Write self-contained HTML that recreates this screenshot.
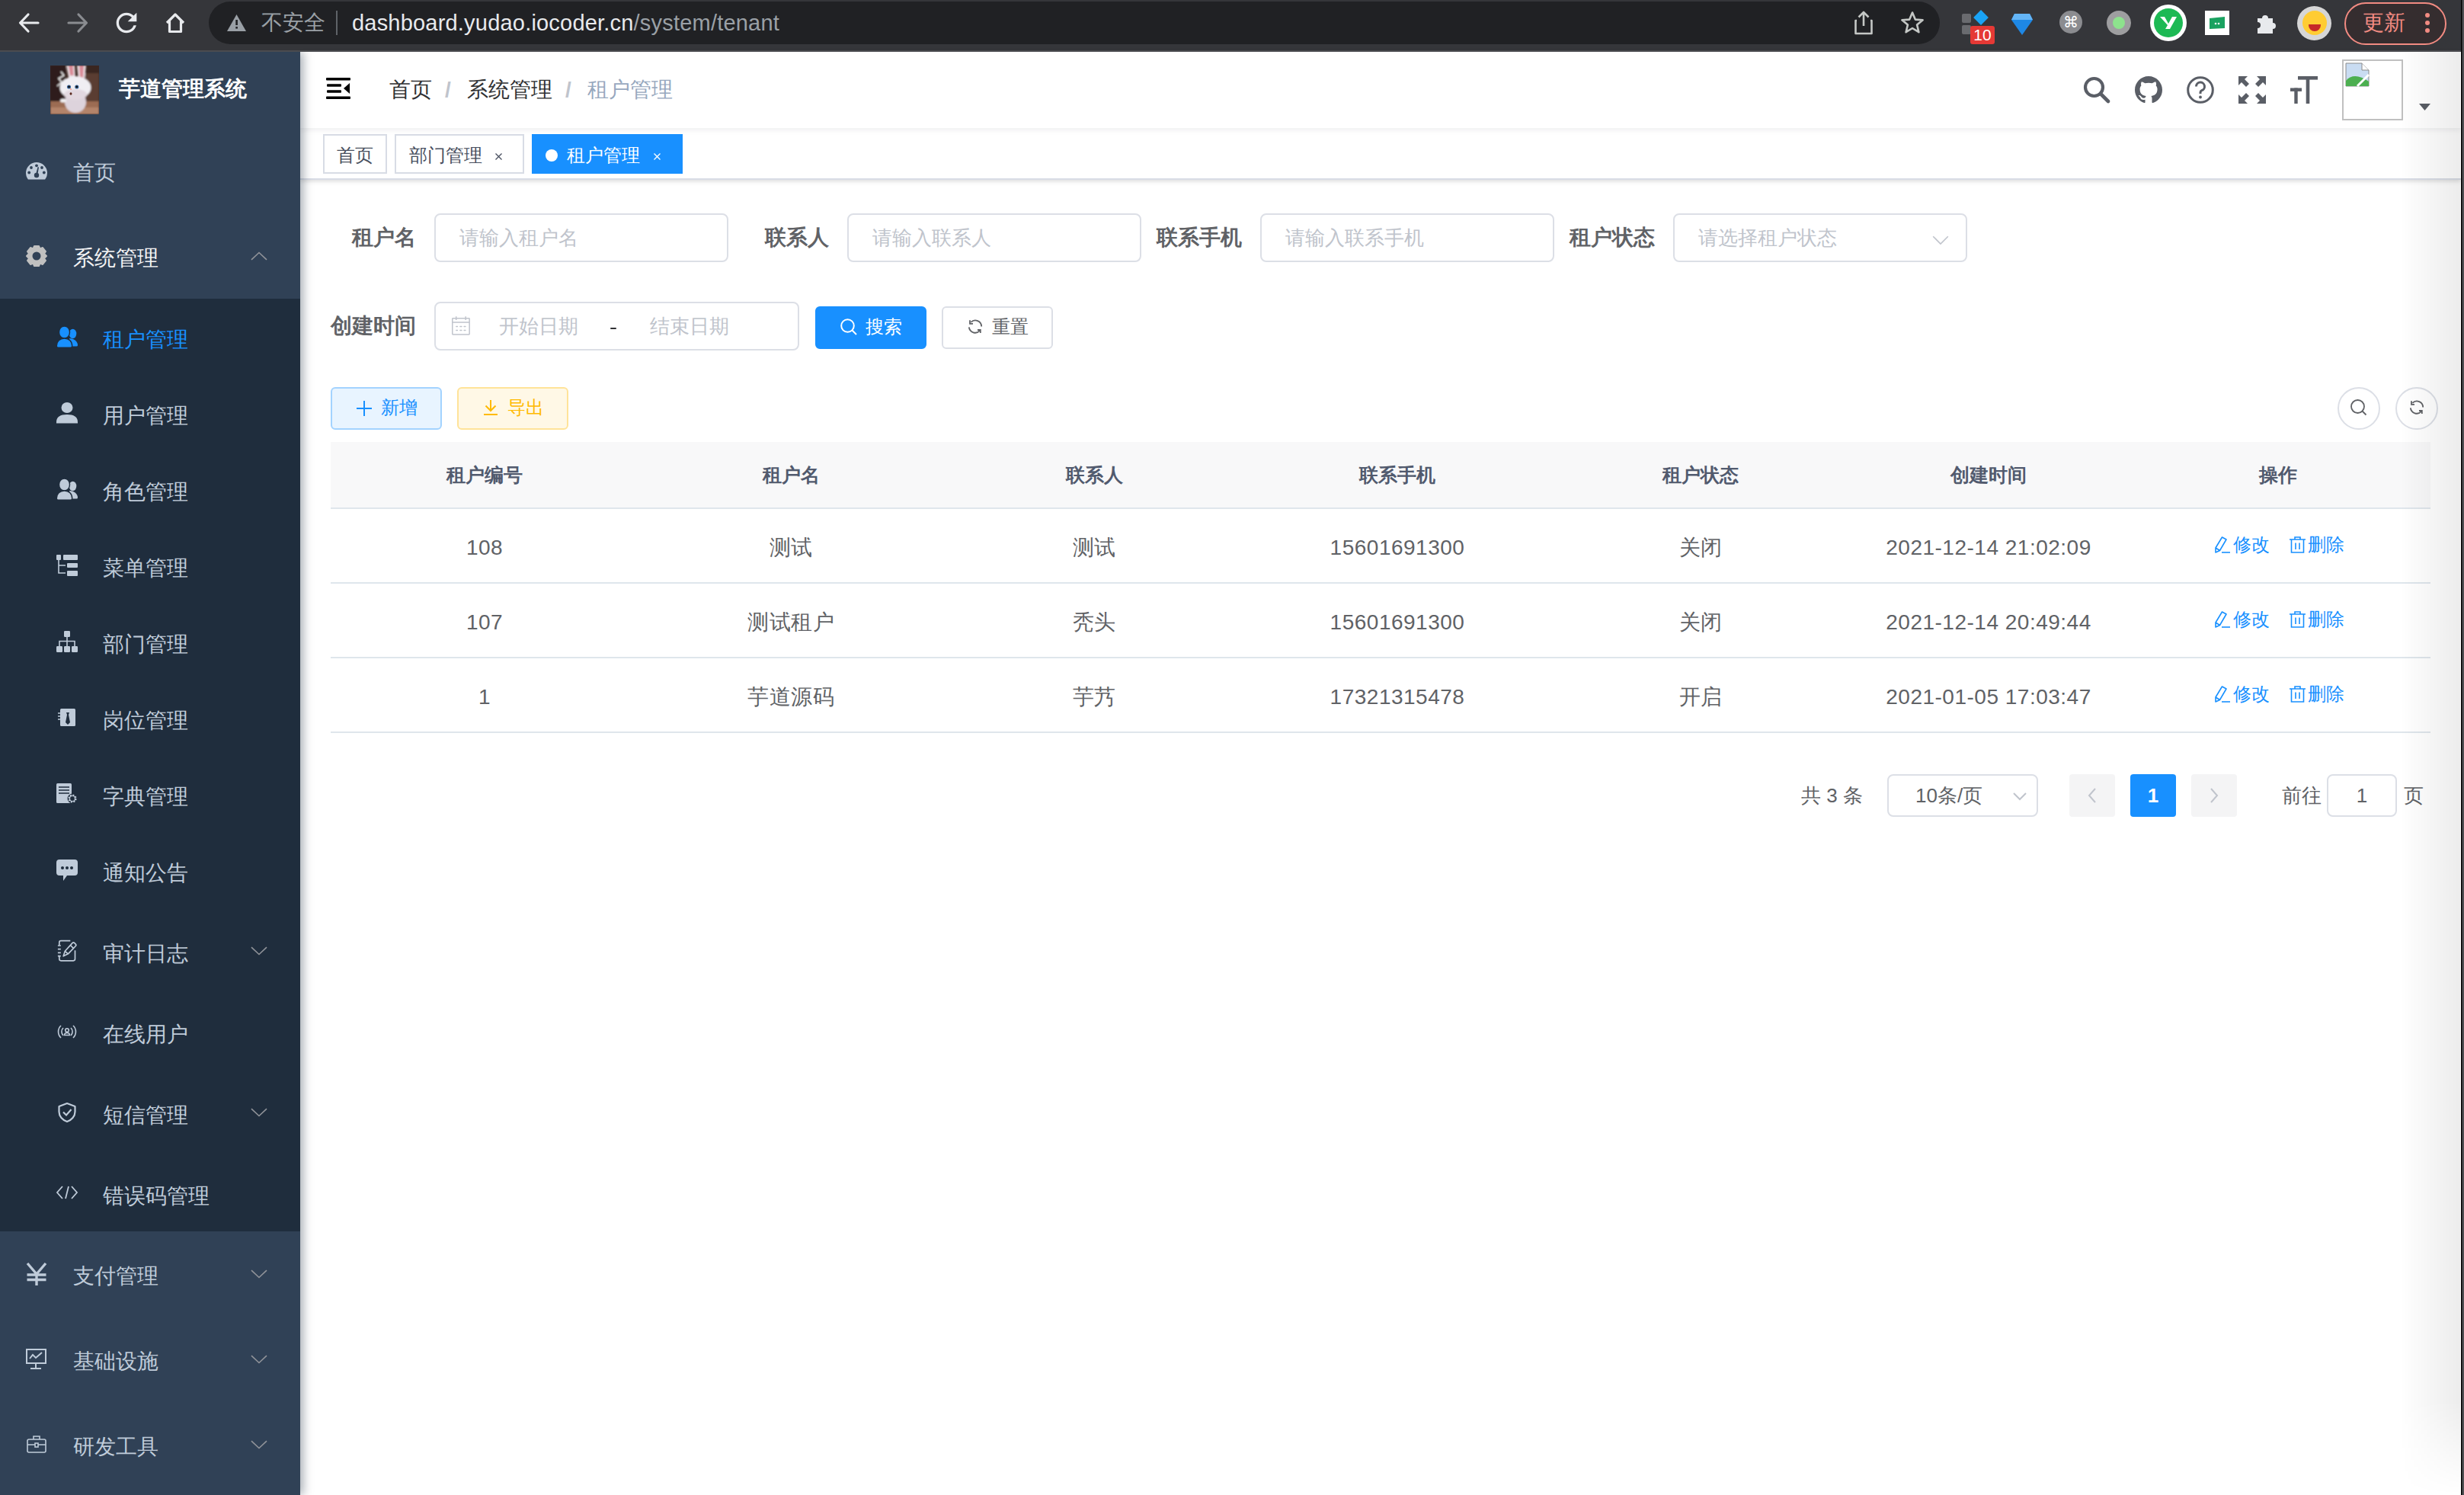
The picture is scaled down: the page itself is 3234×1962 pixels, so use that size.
<!DOCTYPE html>
<html><head><meta charset="utf-8">
<style>
*{box-sizing:border-box;margin:0;padding:0}
html,body{width:3234px;height:1962px;overflow:hidden;background:#fff;font-family:"Liberation Sans",sans-serif;position:relative}
.a{position:absolute}
.t{position:absolute;white-space:nowrap}
svg{position:absolute;overflow:visible}
/* sidebar */
.mi{position:absolute;left:96px;font-size:28px;color:#bfcbd9;line-height:40px;white-space:nowrap;z-index:5}
.si{position:absolute;left:135px;font-size:28px;color:#bfcbd9;line-height:40px;white-space:nowrap;z-index:5}
.arr{position:absolute;left:333px;width:13px;height:13px;border-right:2px solid #bfcbd9;border-bottom:2px solid #bfcbd9;transform:rotate(45deg);z-index:3}
.ic{z-index:5}
.tag{position:absolute;top:176px;height:52px;border:2px solid #d8dce5;background:#fff;color:#495060;font-size:24px;line-height:51px;white-space:nowrap;z-index:2}
.lbl{position:absolute;font-size:28px;font-weight:bold;color:#606266;line-height:64px;text-align:right;white-space:nowrap}
.inp{position:absolute;height:64px;border:2px solid #dcdfe6;border-radius:8px;background:#fff}
.ph{position:absolute;font-size:26px;color:#c0c4cc;line-height:60px;white-space:nowrap}
.btn{position:absolute;height:56px;border-radius:6px;white-space:nowrap}
.bt{position:absolute;font-size:24px;line-height:40px;white-space:nowrap}
.th{position:absolute;top:578.5px;height:88px;line-height:88px;font-size:25px;font-weight:bold;color:#515a6e;text-align:center;white-space:nowrap}
.td{position:absolute;height:96px;line-height:96px;font-size:28px;color:#606266;text-align:center;white-space:nowrap;letter-spacing:0.5px}
.hl{position:absolute;left:434px;width:2756px;height:2px;background:#dfe6ec}
.lk{position:absolute;font-size:24px;line-height:40px;color:#1890ff;white-space:nowrap}
.pg{position:absolute;top:1016px;height:56px;border-radius:4px;font-size:26px;line-height:56px;text-align:center;white-space:nowrap}
</style></head>
<body>
<!-- ================= browser chrome ================= -->
<div class="a" style="left:0;top:0;width:3234px;height:66px;background:#35363a"></div>
<div class="a" style="left:0;top:66px;width:3234px;height:2px;background:#4b4c50"></div>
<div class="a" style="left:274px;top:2px;width:2272px;height:56px;border-radius:28px;background:#202124"></div>
<!-- back -->
<svg style="left:24px;top:16px" width="28" height="28" viewBox="0 0 28 28"><path d="M26 14H3M13 3L2.5 14L13 25" fill="none" stroke="#e8eaed" stroke-width="3.2" stroke-linecap="round" stroke-linejoin="round"/></svg>
<!-- forward -->
<svg style="left:88px;top:16px" width="28" height="28" viewBox="0 0 28 28"><path d="M2 14H25M15 3L25.5 14L15 25" fill="none" stroke="#8a8c90" stroke-width="3.2" stroke-linecap="round" stroke-linejoin="round"/></svg>
<!-- reload -->
<svg style="left:152px;top:16px" width="28" height="28" viewBox="3.6 3.6 16.8 16.8"><path fill="#e8eaed" d="M17.65 6.35A7.958 7.958 0 0 0 12 4c-4.42 0-7.99 3.58-7.99 8s3.57 8 7.99 8c3.73 0 6.84-2.55 7.73-6h-2.08A5.99 5.99 0 0 1 12 18c-3.31 0-6-2.69-6-6s2.69-6 6-6c1.66 0 3.14.69 4.22 1.78L13 11h7V4l-2.35 2.35z"/></svg>
<!-- home -->
<svg style="left:216px;top:16px" width="28" height="28" viewBox="0 0 28 28"><path d="M3 14L14 3L25 14M6.5 11V25.5H21.5V11" fill="none" stroke="#e8eaed" stroke-width="3.2" stroke-linejoin="round"/></svg>
<!-- warning -->
<svg style="left:298px;top:19px" width="25" height="22" viewBox="0 0 25 22"><path d="M12.5 0L25 22H0Z" fill="#9aa0a6"/><rect x="11.3" y="7" width="2.6" height="7" fill="#202124"/><rect x="11.3" y="16" width="2.6" height="2.6" fill="#202124"/></svg>
<div class="t" style="left:343px;top:10px;font-size:28px;line-height:40px;color:#9aa0a6">不安全</div>
<div class="a" style="left:441px;top:14px;width:2px;height:32px;background:#5f6368"></div>
<div class="t" style="left:462px;top:10px;font-size:29px;line-height:40px;color:#e8eaed;letter-spacing:0.2px">dashboard.yudao.iocoder.cn<span style="color:#9aa0a6">/system/tenant</span></div>
<!-- share -->
<svg style="left:2432px;top:14px" width="28" height="32" viewBox="0 0 28 32"><path d="M14 2V20M7.5 8.5L14 2L20.5 8.5M5 13H3.5V30H24.5V13H23" fill="none" stroke="#c4c7c5" stroke-width="2.6" stroke-linejoin="round"/></svg>
<!-- star -->
<svg style="left:2494px;top:14px" width="32" height="32" viewBox="0 0 32 32"><path d="M16 2.5L19.8 11.6L29.6 12.3L22.1 18.6L24.4 28.2L16 23L7.6 28.2L9.9 18.6L2.4 12.3L12.2 11.6Z" fill="none" stroke="#c4c7c5" stroke-width="2.6" stroke-linejoin="round"/></svg>
<!-- ext 1 -->
<div class="a" style="left:2575px;top:18px;width:12px;height:12px;background:#6a6b6f;border-radius:2px"></div>
<div class="a" style="left:2575px;top:33px;width:12px;height:12px;background:#6a6b6f;border-radius:2px"></div>
<div class="a" style="left:2593px;top:16px;width:14px;height:14px;background:#1aa3f5;transform:rotate(45deg)"></div>
<div class="t" style="left:2586px;top:34px;width:32px;height:24px;background:#e53935;border-radius:3px;color:#fff;font-size:21px;line-height:24px;text-align:center">10</div>
<!-- diamond -->
<svg style="left:2640px;top:16px" width="28" height="30" viewBox="0 0 28 30"><path d="M4 2H24L28 10L14 30L0 10Z" fill="#1e88e5"/><path d="M4 2H24L28 10H0Z" fill="#64b5f6"/></svg>
<!-- cmd -->
<div class="a" style="left:2703px;top:14px;width:30px;height:30px;border-radius:50%;background:#8b8c90"></div>
<div class="t" style="left:2703px;top:14px;width:30px;font-size:20px;line-height:30px;color:#fff;text-align:center">⌘</div>
<!-- gray circle with green -->
<div class="a" style="left:2765px;top:14px;width:32px;height:32px;border-radius:50%;background:#9e9ea0"></div>
<div class="a" style="left:2773px;top:22px;width:16px;height:16px;border-radius:50%;background:#8de28d"></div>
<!-- Y circle -->
<div class="a" style="left:2822px;top:6px;width:48px;height:48px;border-radius:50%;background:#fff"></div>
<div class="a" style="left:2827px;top:11px;width:38px;height:38px;border-radius:50%;background:#1db954"></div>
<svg style="left:2834px;top:20px" width="24" height="20" viewBox="0 0 24 20"><path d="M1 2H7L12 11L17 2H23L14 18H8L11 13Z" fill="#fff"/></svg>
<!-- green square -->
<div class="a" style="left:2894px;top:14px;width:32px;height:32px;background:#fff"></div>
<svg style="left:2898px;top:21px" width="24" height="18" viewBox="0 0 24 18"><path d="M2 3L22 1V16L2 17Z" fill="#1aa260"/><circle cx="10" cy="10" r="1.3" fill="#fff"/><circle cx="14" cy="10" r="1.3" fill="#fff"/></svg>
<!-- puzzle -->
<svg style="left:2960px;top:15px" width="30" height="30" viewBox="0 0 30 30"><path d="M3 9H9A4 4 0 0 1 17 9H23V15A4 4 0 0 1 23 23V29H3V22A4 4 0 0 0 3 14Z" fill="#e8eaed"/></svg>
<!-- emoji -->
<div class="a" style="left:3015px;top:8px;width:45px;height:45px;border-radius:50%;background:#d6d6d6"></div>
<div class="a" style="left:3022px;top:14px;width:32px;height:32px;border-radius:50%;background:#ffcc33"></div>
<div class="a" style="left:3030px;top:32px;width:16px;height:9px;border-radius:0 0 9px 9px;background:#c62828"></div>
<!-- update pill -->
<div class="a" style="left:3077px;top:3px;width:134px;height:56px;border-radius:28px;border:2px solid #f28b82;background:#352d2f"></div>
<div class="t" style="left:3101px;top:10px;font-size:28px;line-height:40px;color:#f28b82">更新</div>
<div class="a" style="left:3183px;top:17px;width:6px;height:6px;border-radius:50%;background:#f28b82"></div>
<div class="a" style="left:3183px;top:27px;width:6px;height:6px;border-radius:50%;background:#f28b82"></div>
<div class="a" style="left:3183px;top:37px;width:6px;height:6px;border-radius:50%;background:#f28b82"></div>

<!-- ================= sidebar ================= -->
<div class="a" style="left:0;top:68px;width:394px;height:1894px;background:#304156;box-shadow:4px 0 12px rgba(0,21,41,.35);clip-path:inset(0 -40px 0 0);z-index:4"></div>
<div class="a" style="left:0;top:392px;width:394px;height:1224px;background:#1f2d3d;z-index:4"></div>
<!-- logo -->
<svg class="ic" style="left:66px;top:86px;overflow:hidden" width="64" height="64" viewBox="0 0 64 64">
<defs><filter id="bl" x="-10%" y="-10%" width="120%" height="120%"><feGaussianBlur stdDeviation="0.8"/></filter></defs>
<rect width="64" height="64" fill="#3a2620"/>
<g filter="url(#bl)">
<rect x="0" y="0" width="20" height="64" fill="#2e1e1a"/><rect x="46" y="10" width="18" height="40" fill="#5a3c30"/>
<rect y="47" width="64" height="17" fill="#9c6c52"/><rect y="55" width="64" height="9" fill="#b4846a"/>
<path d="M21 0H32L33 16H24Z" fill="#eadfe4"/><path d="M24 0H30L30.5 13H26Z" fill="#d98a96"/>
<path d="M35 0H47L45 20H37Z" fill="#eadfe4"/><path d="M38 0H44L43 16H39Z" fill="#d98a96"/>
<ellipse cx="33" cy="48" rx="14" ry="14" fill="#ddd3dc"/>
<ellipse cx="33" cy="29" rx="20.5" ry="15" fill="#f0eef3"/>
<ellipse cx="33" cy="38" rx="15" ry="7" fill="#e2d8e0"/>
<ellipse cx="17" cy="46" rx="4" ry="2.5" fill="#f2f2f4"/>
<path d="M14 8L18 13L11 17L15 22L9 27" fill="none" stroke="#f4f4f4" stroke-width="1.6"/>
</g>
<circle cx="24.5" cy="28" r="2.6" fill="#3d6aa0"/><circle cx="24.5" cy="28" r="1.4" fill="#111"/>
<circle cx="34.8" cy="28" r="2.6" fill="#3d6aa0"/><circle cx="34.8" cy="28" r="1.4" fill="#111"/>
<circle cx="27" cy="31" r="1.1" fill="#f0a090"/><ellipse cx="27" cy="37" rx="1.5" ry="1.8" fill="#5a2a1e"/>
</svg>
<div class="t" style="left:156px;top:97px;font-size:28px;line-height:40px;font-weight:bold;color:#fff;z-index:5">芋道管理系统</div>

<!-- home -->
<svg class="ic" style="left:34px;top:212.5px" width="28" height="23" viewBox="0 0 28 23"><path d="M2.9 22.5A14 14 0 1 1 25.1 22.5Z" fill="#bfcbd9"/><g fill="#304156"><circle cx="14" cy="4.3" r="1.9"/><circle cx="7" cy="7" r="1.9"/><circle cx="21" cy="7" r="1.9"/><circle cx="4.2" cy="13.5" r="1.9"/><circle cx="23.8" cy="13.5" r="1.9"/><circle cx="14" cy="17" r="3.2"/><path d="M12.8 16.5L15.6 6L17 6.4L15.2 17Z"/></g></svg>
<div class="mi" style="top:207px">首页</div>
<!-- system gear -->
<svg class="ic" style="left:34px;top:322px" width="28" height="28" viewBox="0 0 28 28"><path d="M11 1H17L18.5 4.5L22 3L26 8L24 11L27 14L24 17L26 20L22 25L18.5 23.5L17 27H11L9.5 23.5L6 25L2 20L4 17L1 14L4 11L2 8L6 3L9.5 4.5Z" fill="#c0c0c0" stroke="#c0c0c0" stroke-width="2" stroke-linejoin="round"/><circle cx="14" cy="14" r="5.5" fill="#304156"/></svg>
<div class="mi" style="top:319px;color:#f4f4f5">系统管理</div>
<svg class="ic" style="left:329px;top:330px" width="22" height="12" viewBox="0 0 22 12"><path d="M1 10.8L11 1.5L21 10.8" fill="none" stroke="#909399" stroke-width="1.6"/></svg>

<!-- submenu items -->
<svg class="ic" style="left:74px;top:428px" width="28" height="28" viewBox="0 0 28 28"><g><ellipse cx="21.5" cy="10" rx="4.8" ry="6.2" fill="#1890ff"/><path d="M17 16C23.5 16 28 20.5 28 25Q28 26.6 26.4 26.6H19Z" fill="#1890ff"/><path d="M10.5 0C14.6 0 17.5 3.5 17.5 8S14.6 16 10.5 16S3.5 12.5 3.5 8S6.4 0 10.5 0Z" fill="#1890ff" stroke="#1f2d3d" stroke-width="1.4"/><path d="M0.3 26C0.3 20 4.5 16 10.5 16S20.7 20 20.7 26Q20.7 28.3 18.5 28.3H2.5Q0.3 28.3 0.3 26Z" fill="#1890ff" stroke="#1f2d3d" stroke-width="1.4"/></g></svg>
<div class="si" style="top:426px;color:#1890ff">租户管理</div>
<svg class="ic" style="left:74px;top:528px" width="28" height="28" viewBox="0 0 28 28"><g fill="#bfcbd9"><ellipse cx="14" cy="7" rx="7.5" ry="7"/><path d="M0 26C0 19 5 16 14 16S28 19 28 26V27.5H0Z"/></g></svg>
<div class="si" style="top:526px">用户管理</div>
<svg class="ic" style="left:74px;top:628px" width="28" height="28" viewBox="0 0 28 28"><g><ellipse cx="21.5" cy="10" rx="4.8" ry="6.2" fill="#bfcbd9"/><path d="M17 16C23.5 16 28 20.5 28 25Q28 26.6 26.4 26.6H19Z" fill="#bfcbd9"/><path d="M10.5 0C14.6 0 17.5 3.5 17.5 8S14.6 16 10.5 16S3.5 12.5 3.5 8S6.4 0 10.5 0Z" fill="#bfcbd9" stroke="#1f2d3d" stroke-width="1.4"/><path d="M0.3 26C0.3 20 4.5 16 10.5 16S20.7 20 20.7 26Q20.7 28.3 18.5 28.3H2.5Q0.3 28.3 0.3 26Z" fill="#bfcbd9" stroke="#1f2d3d" stroke-width="1.4"/></g></svg>
<div class="si" style="top:626px">角色管理</div>
<svg class="ic" style="left:74px;top:728px" width="28" height="28" viewBox="0 0 28 28"><g fill="#bfcbd9"><rect x="0" y="0" width="6" height="7" rx="1"/><rect x="9" y="0" width="19" height="7" rx="1"/><rect x="14" y="11" width="14" height="6" rx="1"/><rect x="14" y="21" width="14" height="7" rx="1"/></g><path d="M3 6V24H12M3 14H12" fill="none" stroke="#bfcbd9" stroke-width="1.6"/></svg>
<div class="si" style="top:726px">菜单管理</div>
<svg class="ic" style="left:74px;top:828px" width="28" height="28" viewBox="0 0 28 28"><g fill="#bfcbd9"><rect x="10" y="0" width="8" height="8" rx="1.2"/><rect x="0" y="20" width="8" height="8" rx="1.2"/><rect x="10" y="20" width="8" height="8" rx="1.2"/><rect x="20" y="20" width="8" height="8" rx="1.2"/></g><path d="M14 8V20M4 20V13.5H24V20" fill="none" stroke="#bfcbd9" stroke-width="1.6"/></svg>
<div class="si" style="top:826px">部门管理</div>
<svg class="ic" style="left:76px;top:930px" width="24" height="24" viewBox="0 0 24 24"><rect x="3" y="0" width="20" height="23" rx="1.5" fill="#bfcbd9"/><path d="M11 5H15L14 8L16 18L13 21L10 18L12 8Z" fill="#1f2d3d"/><path d="M0 6H4M0 10H4M0 14H4" stroke="#bfcbd9" stroke-width="1.5"/></svg>
<div class="si" style="top:926px">岗位管理</div>
<svg class="ic" style="left:74px;top:1028px" width="28" height="28" viewBox="0 0 28 28"><rect x="0" y="0" width="20" height="26" rx="1.5" fill="#bfcbd9"/><g stroke="#1f2d3d" stroke-width="1.6"><path d="M3 5H17M3 9H17M3 13H17"/></g><circle cx="21" cy="20" r="6.5" fill="#1f2d3d"/><circle cx="21" cy="20" r="4.5" fill="none" stroke="#bfcbd9" stroke-width="2.2" stroke-dasharray="2 1.5"/><circle cx="21" cy="20" r="3.5" fill="none" stroke="#bfcbd9" stroke-width="1.2"/></svg>
<div class="si" style="top:1026px">字典管理</div>
<svg class="ic" style="left:74px;top:1128px" width="28" height="28" viewBox="0 0 28 28"><path d="M4 0H24A4 4 0 0 1 28 4V17A4 4 0 0 1 24 21H14L9 28V21H4A4 4 0 0 1 0 17V4A4 4 0 0 1 4 0Z" fill="#bfcbd9"/><g fill="#1f2d3d"><circle cx="8" cy="11" r="2"/><circle cx="14" cy="11" r="2"/><circle cx="20" cy="11" r="2"/></g></svg>
<div class="si" style="top:1126px">通知公告</div>
<svg class="ic" style="left:70px;top:1228px" width="36" height="40" viewBox="0 0 36 40"><g fill="none" stroke="#bfcbd9" stroke-width="1.7" stroke-linejoin="round"><path d="M22.3 6.7H10Q7.8 6.7 7.8 9V12.8"/><path d="M7.8 27V30.6Q7.8 32.8 10 32.8H26.3Q28.5 32.8 28.5 30.6V19.3"/><path d="M5.9 13H9.8M5.9 17.6H9.8M5.9 22.3H9.8M5.9 26.7H9.8"/><path d="M13.2 26.8L15.3 20.3L25.2 9.4Q26.4 8.2 27.6 9.4L29.3 11.1Q30.5 12.3 29.3 13.5L19.4 23.8Z"/><path d="M22.4 12.5L26.5 16.6M15.3 20.3L19.4 23.8"/></g></svg>
<div class="si" style="top:1232px">审计日志</div>
<svg class="ic" style="left:329px;top:1242px" width="22" height="12" viewBox="0 0 22 12"><path d="M1 1.2L11 10.5L21 1.2" fill="none" stroke="#909399" stroke-width="1.6"/></svg>
<svg class="ic" style="left:75px;top:1344px" width="26" height="20" viewBox="0 0 26 20"><g fill="none" stroke="#bfcbd9" stroke-width="1.6"><path d="M5 2A11 11 0 0 0 5 18M8 5A7 7 0 0 0 8 15M21 2A11 11 0 0 1 21 18M18 5A7 7 0 0 1 18 15"/><circle cx="13" cy="8" r="2.3"/><path d="M9.5 14.5A3.5 3 0 0 1 16.5 14.5Z"/></g></svg>
<div class="si" style="top:1338px">在线用户</div>
<svg class="ic" style="left:76px;top:1447px" width="24" height="26" viewBox="0 0 24 26"><path d="M12 1L22.5 5V12C22.5 18 18 23 12 25C6 23 1.5 18 1.5 12V5Z" fill="none" stroke="#bfcbd9" stroke-width="2.2" stroke-linejoin="round"/><path d="M7 12.5L11 16.5L17.5 9" fill="none" stroke="#bfcbd9" stroke-width="2.2"/></svg>
<div class="si" style="top:1444px">短信管理</div>
<svg class="ic" style="left:329px;top:1454px" width="22" height="12" viewBox="0 0 22 12"><path d="M1 1.2L11 10.5L21 1.2" fill="none" stroke="#909399" stroke-width="1.6"/></svg>
<svg class="ic" style="left:74px;top:1556px" width="28" height="18" viewBox="0 0 28 18"><path d="M8 1L1 9L8 17M20 1L27 9L20 17M16 1L12 17" fill="none" stroke="#bfcbd9" stroke-width="1.8"/></svg>
<div class="si" style="top:1550px">错误码管理</div>

<!-- top-level bottom -->
<svg class="ic" style="left:34px;top:1657px" width="28" height="30" viewBox="0 0 28 30"><path d="M2 1L14 15L26 1M14 15V30M1.5 16H26.5M1.5 22.5H26.5" fill="none" stroke="#bfcbd9" stroke-width="3.4"/></svg>
<div class="mi" style="top:1655px">支付管理</div>
<svg class="ic" style="left:329px;top:1666px" width="22" height="12" viewBox="0 0 22 12"><path d="M1 1.2L11 10.5L21 1.2" fill="none" stroke="#909399" stroke-width="1.6"/></svg>
<svg class="ic" style="left:34px;top:1770px" width="27" height="27" viewBox="0 0 27 27"><path d="M1 1H26V19H1Z" fill="none" stroke="#bfcbd9" stroke-width="2"/><path d="M5 13L9 8L13 12L21 5M13 19V25M6 26H20" fill="none" stroke="#bfcbd9" stroke-width="2"/></svg>
<div class="mi" style="top:1767px">基础设施</div>
<svg class="ic" style="left:329px;top:1778px" width="22" height="12" viewBox="0 0 22 12"><path d="M1 1.2L11 10.5L21 1.2" fill="none" stroke="#909399" stroke-width="1.6"/></svg>
<svg class="ic" style="left:35px;top:1884px" width="26" height="23" viewBox="0 0 26 23"><g fill="none" stroke="#bfcbd9" stroke-width="1.6"><rect x="1" y="5" width="24" height="17" rx="2"/><path d="M9 5V1H17V5M1 12H25"/><rect x="11" y="10" width="4" height="5" fill="#304156"/></g></svg>
<div class="mi" style="top:1879px">研发工具</div>
<svg class="ic" style="left:329px;top:1890px" width="22" height="12" viewBox="0 0 22 12"><path d="M1 1.2L11 10.5L21 1.2" fill="none" stroke="#909399" stroke-width="1.6"/></svg>

<!-- ================= navbar ================= -->
<div class="a" style="left:394px;top:68px;width:2836px;height:100px;background:#fff;box-shadow:0 2px 8px rgba(0,21,41,.08);z-index:3"></div>
<svg style="left:428px;top:102px;z-index:3" width="32" height="28" viewBox="0 0 32 28"><g fill="#000"><rect x="0" y="0" width="32" height="3.4" rx="1"/><rect x="1" y="8.3" width="19" height="3.4" rx="1"/><rect x="1" y="16.3" width="19" height="3.4" rx="1"/><rect x="0" y="24.6" width="32" height="3.4" rx="1"/><path d="M31 7V21L23 14Z"/></g></svg>
<div class="t" style="left:511px;top:98px;font-size:28px;line-height:40px;color:#303133;z-index:3">首页</div>
<div class="t" style="left:584px;top:98px;font-size:28px;line-height:40px;color:#c0c4cc;font-weight:bold;z-index:3">/</div>
<div class="t" style="left:613px;top:98px;font-size:28px;line-height:40px;color:#303133;z-index:3">系统管理</div>
<div class="t" style="left:742px;top:98px;font-size:28px;line-height:40px;color:#c0c4cc;font-weight:bold;z-index:3">/</div>
<div class="t" style="left:771px;top:98px;font-size:28px;line-height:40px;color:#97a8be;z-index:3">租户管理</div>
<!-- right icons -->
<svg style="left:2734px;top:100px;z-index:3" width="36" height="36" viewBox="0 0 36 36"><circle cx="14.5" cy="14.5" r="11.5" fill="none" stroke="#5a5e66" stroke-width="4.2"/><path d="M23 23L33 33" stroke="#5a5e66" stroke-width="4.6" stroke-linecap="round"/></svg>
<svg style="left:2802px;top:100px;z-index:3" width="36" height="36" viewBox="0 0 16 16"><path fill="#5a5e66" d="M8 0C3.58 0 0 3.58 0 8c0 3.54 2.29 6.53 5.47 7.59.4.07.55-.17.55-.38 0-.19-.01-.82-.01-1.49-2.01.37-2.53-.49-2.69-.94-.09-.23-.48-.94-.82-1.13-.28-.15-.68-.52-.01-.53.63-.01 1.08.58 1.23.82.72 1.21 1.87.87 2.33.66.07-.52.28-.87.51-1.07-1.78-.2-3.64-.89-3.64-3.95 0-.87.31-1.59.82-2.15-.08-.2-.36-1.02.08-2.12 0 0 .67-.21 2.2.82.64-.18 1.32-.27 2-.27.68 0 1.36.09 2 .27 1.53-1.04 2.2-.82 2.2-.82.44 1.1.16 1.92.08 2.12.51.56.82 1.27.82 2.15 0 3.07-1.87 3.75-3.65 3.95.29.25.54.73.54 1.48 0 1.07-.01 1.93-.01 2.2 0 .21.15.46.55.38A8.013 8.013 0 0016 8c0-4.42-3.58-8-8-8z"/></svg>
<svg style="left:2870px;top:100px;z-index:3" width="36" height="36" viewBox="0 0 36 36"><circle cx="18" cy="18" r="16.3" fill="none" stroke="#5a5e66" stroke-width="3"/><path d="M12.5 13.5A5.5 5.5 0 1 1 19.5 18.8C18.3 19.4 18 20 18 21.5V23" fill="none" stroke="#5a5e66" stroke-width="3"/><circle cx="18" cy="27.5" r="1.9" fill="#5a5e66"/></svg>
<svg style="left:2938px;top:100px;z-index:3" width="36" height="36" viewBox="0 0 36 36"><g fill="#5a5e66"><path d="M0 0H12L8 4L14 10L10 14L4 8L0 12Z"/><path d="M36 0V12L32 8L26 14L22 10L28 4L24 0Z"/><path d="M0 36V24L4 28L10 22L14 26L8 32L12 36Z"/><path d="M36 36H24L28 32L22 26L26 22L32 28L36 24Z"/></g></svg>
<svg style="left:3006px;top:100px;z-index:3" width="36" height="36" viewBox="0 0 36 36"><g fill="#5a5e66"><rect x="10" y="0" width="26" height="4.6"/><rect x="20.7" y="0" width="4.6" height="36"/><rect x="0" y="15.5" width="15" height="4.4"/><rect x="5.3" y="15.5" width="4.4" height="20.5"/></g></svg>
<div class="a" style="left:3074px;top:78px;width:80px;height:80px;border:2px solid #c0c0c0;z-index:3"></div>
<svg style="left:3078px;top:82px;z-index:3" width="32" height="32" viewBox="0 0 32 32"><path d="M1 1H22L31 10V31H1Z" fill="#c9dcf2" stroke="#8a8a8a" stroke-width="1"/><path d="M22 1V10H31" fill="#fff" stroke="#8a8a8a" stroke-width="1"/><path d="M1 31V24C8 16 18 16 31 25V31Z" fill="#4caf50"/><path d="M16 31L31 16" stroke="#fff" stroke-width="3"/></svg>
<svg style="left:3175px;top:136px;z-index:3" width="15" height="9" viewBox="0 0 15 9"><path d="M0 0H15L7.5 9Z" fill="#5a5e66"/></svg>

<!-- ================= tags ================= -->
<div class="a" style="left:394px;top:168px;width:2836px;height:68px;background:#fff;border-bottom:2px solid #d8dce5;box-shadow:0 2px 6px 0 rgba(0,0,0,.12),0 0 6px 0 rgba(0,0,0,.04);z-index:1"></div>
<div class="tag" style="left:424px;width:84px;padding-left:16px">首页</div>
<div class="tag" style="left:518px;width:170px;padding-left:17px">部门管理<svg style="left:130px;top:23px" width="9" height="9" viewBox="0 0 9 9"><path d="M0.5 0.5L8.5 8.5M8.5 0.5L0.5 8.5" stroke="#495060" stroke-width="1.3"/></svg></div>
<div class="tag" style="left:698px;width:198px;padding-left:44px;background:#1890ff;border-color:#1890ff;color:#fff">租户管理<span style="position:absolute;left:16px;top:18px;width:16px;height:16px;border-radius:50%;background:#fff"></span><svg style="left:158px;top:23px" width="9" height="9" viewBox="0 0 9 9"><path d="M0.5 0.5L8.5 8.5M8.5 0.5L0.5 8.5" stroke="#fff" stroke-width="1.3"/></svg></div>

<!-- ================= form ================= -->
<div class="lbl" style="left:434px;top:280px;width:112px">租户名</div>
<div class="inp" style="left:570px;top:280px;width:386px"></div>
<div class="ph" style="left:603px;top:282px">请输入租户名</div>
<div class="lbl" style="left:976px;top:280px;width:112px">联系人</div>
<div class="inp" style="left:1112px;top:280px;width:386px"></div>
<div class="ph" style="left:1145px;top:282px">请输入联系人</div>
<div class="lbl" style="left:1518px;top:280px;width:112px">联系手机</div>
<div class="inp" style="left:1654px;top:280px;width:386px"></div>
<div class="ph" style="left:1687px;top:282px">请输入联系手机</div>
<div class="lbl" style="left:2060px;top:280px;width:112px">租户状态</div>
<div class="inp" style="left:2196px;top:280px;width:386px"></div>
<div class="ph" style="left:2229px;top:282px">请选择租户状态</div>
<svg style="left:2536px;top:309px" width="22" height="13" viewBox="0 0 22 13"><path d="M1.2 1.2L11 11L20.8 1.2" fill="none" stroke="#c0c4cc" stroke-width="1.6"/></svg>

<div class="lbl" style="left:434px;top:396px;width:112px">创建时间</div>
<div class="inp" style="left:570px;top:396px;width:479px"></div>
<svg style="left:585px;top:408px" width="40" height="40" viewBox="0 0 40 40"><g fill="none" stroke="#c0c4cc" stroke-width="1.5"><rect x="8.75" y="9.85" width="22.4" height="21.1" rx="0.6"/><path d="M8.75 14.9H31.15M13.7 7.2V12M26.2 7.2V12"/></g><g fill="#c0c4cc"><rect x="13.1" y="19.7" width="3.1" height="1.5" rx="0.7"/><rect x="18.2" y="19.7" width="3.4" height="1.5" rx="0.7"/><rect x="23.4" y="19.7" width="3.3" height="1.5" rx="0.7"/><rect x="13.1" y="24.8" width="3.1" height="1.5" rx="0.7"/><rect x="18.2" y="24.8" width="3.4" height="1.5" rx="0.7"/><rect x="23.4" y="24.8" width="3.3" height="1.5" rx="0.7"/></g></svg>
<div class="ph" style="left:655px;top:398px">开始日期</div>
<div class="a" style="left:801px;top:429.5px;width:8px;height:2.2px;background:#303133;border-radius:1px"></div>
<div class="ph" style="left:853px;top:398px">结束日期</div>
<div class="btn" style="left:1070px;top:402px;width:146px;background:#1890ff;border:2px solid #1890ff"></div>
<svg style="left:1103px;top:418px" width="22" height="22" viewBox="0 0 22 22"><circle cx="9.5" cy="9.5" r="8.3" fill="none" stroke="#fff" stroke-width="2"/><path d="M15.5 15.5L21 21" stroke="#fff" stroke-width="2"/></svg>
<div class="bt" style="left:1136px;top:409px;color:#fff">搜索</div>
<div class="btn" style="left:1236px;top:402px;width:146px;background:#fff;border:2px solid #dcdfe6"></div>
<svg style="left:1265px;top:413px" width="30" height="30" viewBox="0 0 30 30"><g fill="none" stroke="#606266" stroke-width="1.8"><path d="M9.4 9.9A8.1 8.1 0 0 1 23.2 15.6"/><path d="M8 7.3V11.8H12"/><path d="M6.8 16.4A8.2 8.2 0 0 0 21 21"/><path d="M18 20H21.8V24"/></g></svg>
<div class="bt" style="left:1302px;top:409px;color:#606266">重置</div>

<div class="btn" style="left:434px;top:508px;width:146px;background:#e8f4ff;border:2px solid #a3d3ff"></div>
<svg style="left:468px;top:526px" width="20" height="20" viewBox="0 0 20 20"><path d="M10 0V20M0 10H20" stroke="#1890ff" stroke-width="2"/></svg>
<div class="bt" style="left:500px;top:515px;color:#1890ff">新增</div>
<div class="btn" style="left:600px;top:508px;width:146px;background:#fff8e6;border:2px solid #ffe399"></div>
<svg style="left:635px;top:525px" width="18" height="20" viewBox="0 0 18 20"><path d="M9 0V14M2.5 7.5L9 14L15.5 7.5M0 19H18" fill="none" stroke="#ffba00" stroke-width="2"/></svg>
<div class="bt" style="left:666px;top:515px;color:#ffba00">导出</div>
<div class="a" style="left:3068px;top:508px;width:56px;height:56px;border-radius:50%;border:2px solid #dcdfe6"></div>
<svg style="left:3085px;top:524px" width="22" height="22" viewBox="0 0 22 22"><circle cx="9.5" cy="9.5" r="8.5" fill="none" stroke="#606266" stroke-width="1.8"/><path d="M15.5 15.5L20.5 20.5" stroke="#606266" stroke-width="1.8"/></svg>
<div class="a" style="left:3144px;top:508px;width:56px;height:56px;border-radius:50%;border:2px solid #dcdfe6"></div>
<svg style="left:3156.5px;top:518.7px" width="30" height="30" viewBox="0 0 30 30"><g fill="none" stroke="#606266" stroke-width="1.8"><path d="M9.4 9.9A8.1 8.1 0 0 1 23.2 15.6"/><path d="M8 7.3V11.8H12"/><path d="M6.8 16.4A8.2 8.2 0 0 0 21 21"/><path d="M18 20H21.8V24"/></g></svg>

<!-- ================= table ================= -->
<div class="a" style="left:434px;top:580px;width:2756px;height:88px;background:#f8f8f9"></div>
<div class="hl" style="top:666px"></div>
<div class="hl" style="top:764px"></div>
<div class="hl" style="top:862px"></div>
<div class="hl" style="top:960px"></div>
<div class="th" style="left:434px;width:404px">租户编号</div>
<div class="th" style="left:838px;width:400px">租户名</div>
<div class="th" style="left:1238px;width:396px">联系人</div>
<div class="th" style="left:1634px;width:400px">联系手机</div>
<div class="th" style="left:2034px;width:396px">租户状态</div>
<div class="th" style="left:2430px;width:360px">创建时间</div>
<div class="th" style="left:2790px;width:400px">操作</div>

<div class="td" style="top:670.5px;left:434px;width:404px">108</div>
<div class="td" style="top:670.5px;left:838px;width:400px">测试</div>
<div class="td" style="top:670.5px;left:1238px;width:396px">测试</div>
<div class="td" style="top:670.5px;left:1634px;width:400px">15601691300</div>
<div class="td" style="top:670.5px;left:2034px;width:396px">关闭</div>
<div class="td" style="top:670.5px;left:2430px;width:360px">2021-12-14 21:02:09</div>

<div class="td" style="top:768.5px;left:434px;width:404px">107</div>
<div class="td" style="top:768.5px;left:838px;width:400px">测试租户</div>
<div class="td" style="top:768.5px;left:1238px;width:396px">秃头</div>
<div class="td" style="top:768.5px;left:1634px;width:400px">15601691300</div>
<div class="td" style="top:768.5px;left:2034px;width:396px">关闭</div>
<div class="td" style="top:768.5px;left:2430px;width:360px">2021-12-14 20:49:44</div>

<div class="td" style="top:866.5px;left:434px;width:404px">1</div>
<div class="td" style="top:866.5px;left:838px;width:400px">芋道源码</div>
<div class="td" style="top:866.5px;left:1238px;width:396px">芋艿</div>
<div class="td" style="top:866.5px;left:1634px;width:400px">17321315478</div>
<div class="td" style="top:866.5px;left:2034px;width:396px">开启</div>
<div class="td" style="top:866.5px;left:2430px;width:360px">2021-01-05 17:03:47</div>

<!-- ops -->
<svg style="left:2907px;top:704px" width="21" height="22" viewBox="0 0 21 22"><path d="M9.5 1L15 4L6.5 18.5L1 21L1 15Z M1 15L6.5 18.5" fill="none" stroke="#1890ff" stroke-width="1.6" stroke-linejoin="round"/><path d="M9 21H20" stroke="#1890ff" stroke-width="1.6"/></svg>
<div class="lk" style="left:2931px;top:695px">修改</div>
<svg style="left:3005px;top:704px" width="21" height="22" viewBox="0 0 21 22"><path d="M0 4H21M7 4V1H14V4M2.5 4V21H18.5V4M8 8.5V17M13 8.5V17" fill="none" stroke="#1890ff" stroke-width="1.6"/></svg>
<div class="lk" style="left:3029px;top:695px">删除</div>

<svg style="left:2907px;top:802px" width="21" height="22" viewBox="0 0 21 22"><path d="M9.5 1L15 4L6.5 18.5L1 21L1 15Z M1 15L6.5 18.5" fill="none" stroke="#1890ff" stroke-width="1.6" stroke-linejoin="round"/><path d="M9 21H20" stroke="#1890ff" stroke-width="1.6"/></svg>
<div class="lk" style="left:2931px;top:793px">修改</div>
<svg style="left:3005px;top:802px" width="21" height="22" viewBox="0 0 21 22"><path d="M0 4H21M7 4V1H14V4M2.5 4V21H18.5V4M8 8.5V17M13 8.5V17" fill="none" stroke="#1890ff" stroke-width="1.6"/></svg>
<div class="lk" style="left:3029px;top:793px">删除</div>

<svg style="left:2907px;top:900px" width="21" height="22" viewBox="0 0 21 22"><path d="M9.5 1L15 4L6.5 18.5L1 21L1 15Z M1 15L6.5 18.5" fill="none" stroke="#1890ff" stroke-width="1.6" stroke-linejoin="round"/><path d="M9 21H20" stroke="#1890ff" stroke-width="1.6"/></svg>
<div class="lk" style="left:2931px;top:891px">修改</div>
<svg style="left:3005px;top:900px" width="21" height="22" viewBox="0 0 21 22"><path d="M0 4H21M7 4V1H14V4M2.5 4V21H18.5V4M8 8.5V17M13 8.5V17" fill="none" stroke="#1890ff" stroke-width="1.6"/></svg>
<div class="lk" style="left:3029px;top:891px">删除</div>

<!-- ================= pagination ================= -->
<div class="t" style="left:2364px;top:1024px;font-size:26px;line-height:40px;color:#606266">共 3 条</div>
<div class="inp" style="left:2477px;top:1016px;width:198px;height:56px"></div>
<div class="t" style="left:2514px;top:1024px;font-size:26px;line-height:40px;color:#606266">10条/页</div>
<svg style="left:2642px;top:1040px" width="18" height="11" viewBox="0 0 18 11"><path d="M1 1L9 9L17 1" fill="none" stroke="#c0c4cc" stroke-width="2"/></svg>
<div class="pg" style="left:2716px;width:60px;background:#f4f4f5"></div>
<svg style="left:2740px;top:1034px" width="12" height="20" viewBox="0 0 12 20"><path d="M10 1L2 10L10 19" fill="none" stroke="#c0c4cc" stroke-width="2"/></svg>
<div class="pg" style="left:2796px;width:60px;background:#1890ff;color:#fff;font-weight:bold">1</div>
<div class="pg" style="left:2876px;width:60px;background:#f4f4f5"></div>
<svg style="left:2900px;top:1034px" width="12" height="20" viewBox="0 0 12 20"><path d="M2 1L10 10L2 19" fill="none" stroke="#c0c4cc" stroke-width="2"/></svg>
<div class="t" style="left:2995px;top:1024px;font-size:26px;line-height:40px;color:#606266">前往</div>
<div class="inp" style="left:3054px;top:1016px;width:92px;height:56px"></div>
<div class="t" style="left:3054px;top:1024px;width:92px;text-align:center;font-size:26px;line-height:40px;color:#606266">1</div>
<div class="t" style="left:3155px;top:1024px;font-size:26px;line-height:40px;color:#606266">页</div>

<!-- right edge shadow + border -->
<div class="a" style="left:3150px;top:68px;width:79px;height:1894px;background:linear-gradient(to right,rgba(0,0,0,0),rgba(0,0,0,.075));-webkit-mask-image:linear-gradient(to bottom,#000 0,#000 1770px,rgba(0,0,0,0) 1894px);z-index:6"></div>
<div class="a" style="left:3230px;top:0;width:1px;height:1962px;background:#000;z-index:7"></div><div class="a" style="left:3231px;top:0;width:1px;height:1962px;background:#2a2a2c;z-index:7"></div>
<div class="a" style="left:3232px;top:0;width:2px;height:1962px;background:#505154;z-index:7"></div>
</body></html>
